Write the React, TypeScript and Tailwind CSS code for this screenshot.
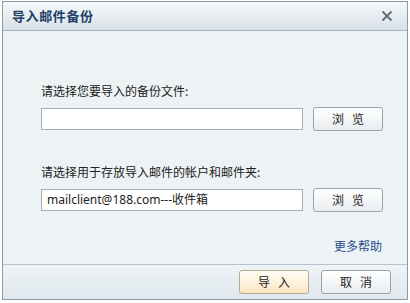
import React from 'react';

const cjk = { fontFamily: '"SimSun", "Noto Sans CJK SC", sans-serif' };

const BrowseButton: React.FC<{ label: string; primary?: boolean }> = ({ label, primary }) => (
  <button
    type="button"
    className={
      primary
        ? 'w-[70px] h-[24px] rounded-[3px] border border-[#b7ab8f] bg-gradient-to-b from-[#fffdf6] to-[#fbe6c2] text-[12px] text-[#222] tracking-[8px] pl-[8px]'
        : 'w-[70px] h-[24px] rounded-[3px] border border-[#9aa3ab] bg-gradient-to-b from-[#ffffff] to-[#e9edf0] text-[12px] text-[#222] tracking-[8px] pl-[8px]'
    }
    style={cjk}
  >
    {label}
  </button>
);

const App: React.FC = () => {
  return (
    <div className="w-[410px] h-[303px] bg-white pt-[1px] pl-[2px]">
      <div className="w-[406px] h-[299px] border border-[#8d99a4] flex flex-col bg-[#edf2f5]">
        {/* title bar */}
        <div className="h-[29px] flex items-center justify-between px-[9px] bg-gradient-to-b from-[#f5f8fa] to-[#d8e1e8] border-b border-[#a7b4bf]">
          <span className="text-[13px] font-bold text-[#1f3e66] tracking-[0.6px]" style={cjk}>导入邮件备份</span>
          <svg width="12" height="12" viewBox="0 0 12 12" className="mr-[5px]">
            <path d="M1.5 1.5 L10.5 10.5 M10.5 1.5 L1.5 10.5" stroke="#5f6a75" strokeWidth="1.8" />
          </svg>
        </div>

        {/* body */}
        <div className="flex-1 pl-[38px] pr-[23px] pt-[52px]">
          <div className="text-[12px] text-[#222] leading-[16px] mb-[8px]" style={cjk}>请选择您要导入的备份文件:</div>
          <div className="flex items-center gap-[10px]">
            <div className="w-[262px] h-[22px] bg-white border border-[#a5afb8]" />
            <BrowseButton label="浏览" />
          </div>

          <div className="text-[12px] text-[#222] leading-[16px] mt-[33px] mb-[8px]" style={cjk}>请选择用于存放导入邮件的帐户和邮件夹:</div>
          <div className="flex items-center gap-[10px]">
            <div className="w-[262px] h-[22px] bg-white border border-[#a5afb8] flex items-center px-[5px] text-[12px] text-[#222]" style={{ fontFamily: '"Noto Sans", "Noto Sans CJK SC", sans-serif' }}>
              mailclient@188.com---收件箱
            </div>
            <BrowseButton label="浏览" />
          </div>

          <div className="flex justify-end mt-[25px] pr-[2px]">
            <span className="text-[12px] text-[#1e4f8a]" style={cjk}>更多帮助</span>
          </div>
        </div>

        {/* footer */}
        <div className="h-[35px] border-t border-[#b6c2cb] bg-gradient-to-b from-[#eef3f6] to-[#dfe8ee] flex items-center justify-end gap-[12px] pr-[16px]">
          <BrowseButton label="导入" primary />
          <BrowseButton label="取消" />
        </div>
      </div>
    </div>
  );
};

export default App;
